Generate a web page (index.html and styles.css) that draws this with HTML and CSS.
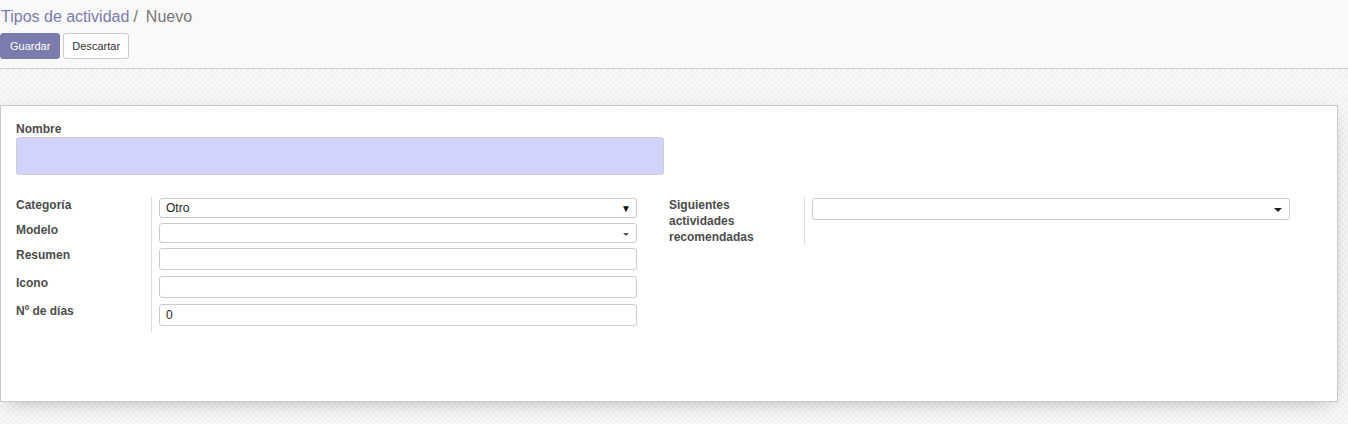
FILE: index.html
```html
<!DOCTYPE html>
<html lang="es">
<head>
<meta charset="utf-8">
<title>Tipos de actividad / Nuevo</title>
<link rel="stylesheet" href="styles.css">
</head>
<body>
<div class="control-panel">
  <div class="breadcrumb">
    <a class="crumb-link">Tipos de actividad</a><span class="crumb-sep">/</span><span class="crumb-active">Nuevo</span>
  </div>
  <div class="buttons">
    <button class="btn btn-primary">Guardar</button>
    <button class="btn btn-default">Descartar</button>
  </div>
</div>
<div class="content">
  <div class="sheet">
    <div class="title">
      <label class="title-label">Nombre</label>
      <div class="title-input"></div>
    </div>
    <div class="groups">
      <div class="group group-left">
        <div class="labels">
          <div class="lbl r20">Categoría</div>
          <div class="lbl r20">Modelo</div>
          <div class="lbl r22">Resumen</div>
          <div class="lbl r22">Icono</div>
          <div class="lbl r22">Nº de días</div>
        </div>
        <div class="fields">
          <div class="row r20"><div class="inp h20 select"><span>Otro</span><span class="arrow-solid">▼</span></div></div>
          <div class="row r20"><div class="inp h20 select"><span></span><span class="caret small"></span></div></div>
          <div class="row r22"><div class="inp h22"></div></div>
          <div class="row r22"><div class="inp h22"></div></div>
          <div class="row r22"><div class="inp h22"><span>0</span></div></div>
        </div>
      </div>
      <div class="group group-right">
        <div class="labels">
          <div class="lbl multi">Siguientes actividades recomendadas</div>
        </div>
        <div class="fields">
          <div class="row"><div class="inp h22 select"><span></span><span class="caret"></span></div></div>
        </div>
      </div>
    </div>
  </div>
</div>
</body>
</html>
```
FILE: styles.css
```css
* { box-sizing: border-box; }
html, body { margin: 0; padding: 0; }
body {
  font-family: "Liberation Sans", Arial, Helvetica, sans-serif;
  font-size: 12px;
  color: #4c4c4c;
  background-color: #f6f6f6;
  background-image:
    conic-gradient(#f2f2f2 25%, #f8f8f8 0 50%, #f2f2f2 0 75%, #f8f8f8 0);
  background-size: 6px 6px;
  height: 424px;
  overflow: hidden;
}
.control-panel {
  background: #f9f9f9;
  border-bottom: 1px solid #cfcfcf;
  height: 69px;
  padding-top: 7px;
}
.breadcrumb {
  font-size: 16px;
  line-height: 20px;
  padding-left: 1px;
  height: 26px;
}
.crumb-link { color: #7c7bad; }
.crumb-sep { color: #777; margin: 0 8px 0 4px; }
.crumb-active { color: #777; }
.buttons { display: flex; gap: 3px; }
.btn {
  font-family: "Liberation Sans", Arial, sans-serif;
  font-size: 11px;
  height: 26px;
  padding: 0 9px;
  border-radius: 3px;
  border: 1px solid transparent;
  line-height: 24px;
}
.btn-primary { background: #7c7bad; color: #fff; border-color: #7c7bad; }
.btn-default { background: #fff; color: #333; border-color: #ccc; padding: 0 8px; }
.content { padding: 36px 10px 0 0; }
.sheet {
  background: #fff;
  border: 1px solid #c8c8d3;
  box-shadow: 0 5px 20px -8px rgba(0,0,0,0.35);
  height: 297px;
  padding: 15px 15px 0 15px;
}
.title-label {
  display: block;
  font-weight: bold;
  line-height: 16px;
  height: 16px;
}
.title-input {
  width: 648px;
  height: 38px;
  background: #d2d2ff;
  border: 1px solid #ccc;
  border-radius: 3px;
}
.groups { display: flex; margin-top: 22px; }
.group { display: flex; width: 653px; }
.group-right { align-items: flex-start; }
.labels { width: 135px; flex: none; padding-top: 0; }
.lbl { font-weight: bold; line-height: 16px; }
.lbl.r20 { height: 25px; }
.lbl.r22 { height: 28px; }
.lbl.multi { width: 100px; line-height: 16px; }
.fields {
  border-left: 1px solid #ddd;
  padding: 1px 0 5px 7px;
}
.group-right .fields { height: 48px; }
.group-left .fields { height: 135px; }
.row.r20 { height: 25px; }
.row.r22 { height: 28px; }
.inp {
  width: 478px;
  border: 1px solid #ccc;
  border-radius: 3px;
  display: flex;
  align-items: center;
  justify-content: space-between;
  padding: 0 6px;
  color: #222;
  font-size: 12px;
}
.h20 { height: 20px; }
.h22 { height: 22px; }
.arrow-solid { font-size: 10px; color: #111; margin-right: -1px; }
.caret {
  width: 0; height: 0;
  border-left: 4px solid transparent;
  border-right: 4px solid transparent;
  border-top: 4px solid #222;
  margin-right: 1px;
  margin-top: 2px;
}
.caret.small {
  border-left-width: 3px;
  border-right-width: 3px;
  border-top-width: 3px;
  border-top-color: #555;
}
```
